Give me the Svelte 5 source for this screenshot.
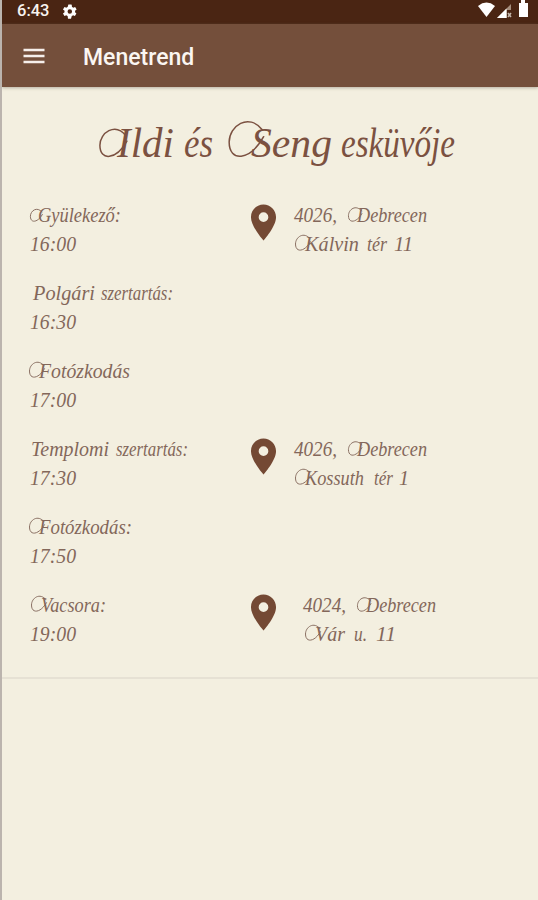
<script lang="ts">
  // text, x, width, width of the flourish in front of the capital
  type Word = [string, number, number, number?];
  type Entry = { label: Word[]; time: string; address?: Word[][] };

  const title: Word[] = [
    ["Ildi", 97, 75, 18],
    ["és", 182, 29],
    ["Seng", 226, 104, 23],
    ["esküvője", 339, 114],
  ];

  const entries: Entry[] = [
    {
      label: [["Gyülekező:", 1, 91, 8]],
      time: "16:00",
      address: [
        [["4026,", 0, 43], ["Debrecen", 54, 79, 9]],
        [["Kálvin", 1, 64, 10], ["tér", 73, 20], ["11", 100, 19]],
      ],
    },
    { label: [["Polgári", 4, 62], ["szertartás:", 72, 72]], time: "16:30" },
    { label: [["Fotózkodás", 0, 101, 10]], time: "17:00" },
    {
      label: [["Templomi", 2, 78], ["szertartás:", 87, 72]],
      time: "17:30",
      address: [
        [["4026,", 0, 43], ["Debrecen", 54, 79, 9]],
        [["Kossuth", 1, 69, 10], ["tér", 80, 19], ["1", 105, 10]],
      ],
    },
    { label: [["Fotózkodás:", 0, 103, 10]], time: "17:50" },
    {
      label: [["Vacsora:", 2, 75, 10]],
      time: "19:00",
      address: [
        [["4024,", 9, 43], ["Debrecen", 63, 79, 9]],
        [["Vár", 11, 40, 10], ["u.", 60, 13], ["11", 82, 20]],
      ],
    },
  ];
</script>

{#snippet phrase(words: Word[], y: number)}
  {#each words as [, x, , swash]}
    {#if swash}
      <path
        class="swash"
        transform="translate({x} {y}) scale({swash / 20} {swash / 17})"
        d="M30-20C18-33 1-23 1-11C1 4 19 3 31-15"
      ></path>
    {/if}
  {/each}
  <text {y}>
    {#each words as [word, x, width, swash = 0]}
      <tspan x={x + swash} textLength={width - swash} lengthAdjust="spacingAndGlyphs">{word}</tspan>
    {/each}
  </text>
{/snippet}

{#snippet line(words: Word[])}
  <svg class="line" width="200" height="28.5">
    {@render phrase(words, 20.5)}
  </svg>
{/snippet}

<div class="screen">
  <header class="status">
    <span class="clock">6:43</span>
    <svg class="gear" viewBox="2 2 20 20" aria-hidden="true">
      <path
        fill="#fff"
        fill-rule="evenodd"
        d="M19.4 13a7.5 7.5 0 0 0 0-2l2.1-1.6-2-3.5-2.5 1a7.6 7.6 0 0 0-1.7-1L15 3.3 14.5 2.5h-4L9.5 5.9a7.6 7.6 0 0 0-1.7 1l-2.5-1-2 3.5L5.4 11a7.5 7.5 0 0 0 0 2l-2.1 1.6 2 3.5 2.5-1a7.6 7.6 0 0 0 1.7 1l.5 3.4h4l1-3.4a7.6 7.6 0 0 0 1.7-1l2.5 1 2-3.5zM12.4 15a3 3 0 1 1 0-6 3 3 0 0 1 0 6z"
      ></path>
    </svg>
    <svg class="signals" width="56" height="24" viewBox="0 0 56 24" aria-hidden="true">
      <path fill="#fff" d="M1 6Q9.5-.8 18 6L9.5 17z"></path>
      <path fill="#a58e7d" d="M20 18 34 4v6h-4v8z"></path>
      <path fill="#fff" d="M20 18 29.5 8.5V18z"></path>
      <path stroke="#c6b8ac" stroke-width="1.5" d="m31 13 3 4m0-4-3 4"></path>
      <path fill="#fff" d="M42 3h2V0h4v3h3v14h-9z"></path>
    </svg>
  </header>

  <nav class="bar">
    <svg width="22" height="16" viewBox="0 0 22 16" aria-hidden="true">
      <path stroke="#f6efeb" stroke-width="2.3" d="M.5 2h21M.5 8h21M.5 14h21"></path>
    </svg>
    <span class="heading">Menetrend</span>
  </nav>

  <main>
    <svg class="title" width="536" height="84" role="heading" aria-level="1">
      {@render phrase(title, 70)}
    </svg>

    <div class="schedule">
      {#each entries as entry, index (index)}
        <section class="entry">
          <div class="lines">
            {@render line(entry.label)}
            {@render line([[entry.time, 1, 46]])}
          </div>
          {#if entry.address}
            <svg class="pin" viewBox="0 0 24 24" aria-hidden="true">
              <path
                d="M12 2C8.13 2 5 5.13 5 9c0 5.25 7 13 7 13s7-7.75 7-13c0-3.87-3.13-7-7-7zm0 9.7a2.7 2.7 0 0 1 0-5.4 2.7 2.7 0 0 1 0 5.4z"
              ></path>
            </svg>
            <div class="lines">
              {#each entry.address as words}
                {@render line(words)}
              {/each}
            </div>
          {/if}
        </section>
      {/each}
    </div>
  </main>
</div>

<style>
  :global(body) {
    margin: 0;
    background: #f3efe0;
  }

  .screen {
    box-sizing: border-box;
    width: 538px;
    height: 900px;
    overflow: hidden;
    border-left: 2px solid #bbb4ae;
    background: #f3efe0;
    font-family: Roboto, sans-serif;
  }

  .status {
    display: flex;
    align-items: center;
    height: 24px;
    background: #4a2513;
    color: #f8f3ef;
  }

  .clock {
    width: 45px;
    height: 24px;
    padding-left: 15px;
    font-size: 16.5px;
    font-weight: 500;
    line-height: 22px;
  }

  .gear {
    width: 15px;
    height: 15px;
    margin-bottom: 2px;
  }

  .signals {
    margin-left: auto;
    margin-right: 5px;
  }

  .bar {
    display: flex;
    align-items: center;
    gap: 38.5px;
    box-sizing: border-box;
    height: 63px;
    padding: 1px 0 0 20.5px;
    background: #744f3b;
    box-shadow: 0 1px 3px #7d756580;
  }

  .heading {
    padding-top: 4px;
    color: #fbf6f2;
    font-size: 23px;
    font-weight: 500;
    line-height: 30px;
  }

  main {
    height: 590px;
    border-bottom: 2px solid #e6e1d4;
  }

  svg {
    display: block;
    flex: none;
    overflow: visible;
  }

  text {
    fill: #83675a;
    font-family: "Liberation Serif", serif;
    font-size: 22px;
    font-style: italic;
  }

  .swash {
    fill: none;
    stroke: #8b7164;
    stroke-width: 1px;
    stroke-linecap: round;
    vector-effect: non-scaling-stroke;
  }

  .title {
    margin-bottom: 30px;
  }

  .title text {
    fill: #7b5141;
    font-size: 43px;
  }

  .title .swash {
    stroke: #7b5141;
    stroke-width: 1.5px;
  }

  .schedule {
    display: grid;
    grid-auto-rows: 78px;
  }

  .entry {
    display: grid;
    grid-template-columns: 212.5px 52.5px 1fr;
    align-items: start;
    padding-left: 27px;
  }

  .pin {
    width: 43px;
    height: 43px;
    fill: #744934;
  }
</style>
